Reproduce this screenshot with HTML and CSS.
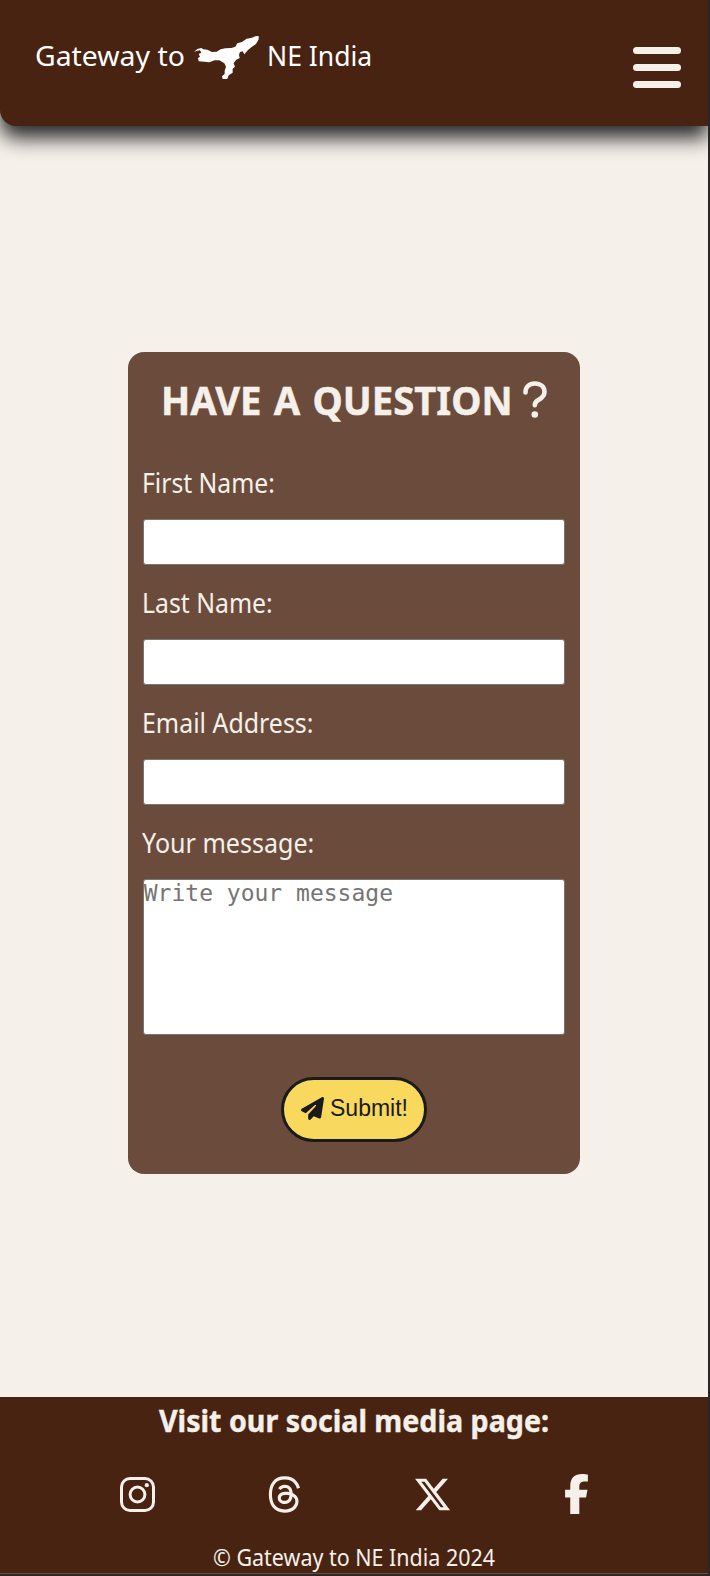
FILE: index.html
```html
<!DOCTYPE html>
<html lang="en">
<head>
<meta charset="utf-8">
<title>Gateway to NE India</title>
<link rel="stylesheet" href="styles.css">
</head>
<body>
<div class="page">
  <header class="header">
    <a class="brand">
      <span class="brand-start"><span class="fit fit-gateway">Gateway to</span></span>
      <svg class="brand-map" viewBox="9 9 201 135"><path d="M12 60 22 51 34 48 40 52 52 53 66 60 80 59 92 52 106 49 124 48 136 44 142 34 156 30 170 20 186 17 196 13 206 12 206 22 198 36 186 44 174 54 163 67 158 58 150 60 147 68 149 78 138 84 131 94 135 104 128 110 128 122 116 130 112 141 98 141 96 133 104 126 104 116 108 104 103 94 88 85 74 85 58 91 44 89 26 88 24 78 30 74 26 66 34 62 30 55 22 56Z"/></svg>
      <span class="brand-end"><span class="fit fit-india">NE India</span></span>
    </a>
    <button class="menu" aria-label="Menu"><span></span><span></span><span></span></button>
  </header>
  <main class="main">
    <form class="card">
      <h1 class="card-title">
        <span class="title-text"><span class="fit fit-title">HAVE A QUESTION</span></span>
        <svg class="question" viewBox="0 0 24 37"><path d="M2.500 11.500C2.500 6 6.200 2.500 11.800 2.500C17.600 2.500 21.500 6 21.500 10.800C21.500 14.800 19.500 16.800 15.500 18.900C12.800 20.300 11.800 21.800 11.800 24.300"/><circle cx="11.800" cy="33.500" r="3.300"/></svg>
      </h1>
      <label class="field"><span class="label fit fit-first">First Name:</span><input type="text"></label>
      <label class="field"><span class="label fit fit-last">Last Name:</span><input type="text"></label>
      <label class="field"><span class="label fit fit-email">Email Address:</span><input type="email"></label>
      <label class="field"><span class="label fit fit-message">Your message:</span><textarea placeholder="Write your message"></textarea></label>
      <button class="submit" type="button">
        <svg class="plane" viewBox="0 0 512 512"><path d="M498.100 5.600c10.100 7 15.400 19.100 13.500 31.200l-64 416c-1.500 9.700-7.400 18.200-16 23s-18.900 5.400-28 1.600L284 427.700l-68.500 74.100c-8.900 9.700-22.900 12.900-35.200 8.100S160 493.200 160 480V396.400c0-4 1.500-7.800 4.200-10.700L331.800 202.800c5.800-6.300 5.600-16-.4-22s-15.700-6.400-22-.7L106 360.800 17.700 316.600C7.100 311.300 .3 300.700 0 288.900s5.900-22.800 16.100-28.700l448-256c10.700-6.100 23.900-5.500 34 1.400z"/></svg>
        <span>Submit!</span>
      </button>
    </form>
  </main>
  <footer class="footer">
    <h2 class="social-title"><span class="fit fit-social">Visit our social media page:</span></h2>
    <nav class="socials">
      <a><svg class="instagram" viewBox="0 0 35 35"><rect x="1.500" y="1.500" width="32" height="32" rx="8.500"/><circle cx="17.500" cy="17.500" r="7.400"/><circle class="dot" cx="26.800" cy="8.200" r="2.100"/></svg></a>
      <a><svg class="threads" viewBox="32 0 384 512"><path d="M331.500 235.700c2.200 .9 4.200 1.900 6.300 2.800c29.200 14.100 50.600 35.200 61.800 61.400c15.700 36.500 17.200 95.800-30.300 143.200c-36.200 36.200-80.300 52.500-142.600 53h-.3c-70.200-.5-124.100-24.100-160.400-70.200c-32.300-41-48.900-98.100-49.500-169.600V256v-.2C17 184.300 33.600 127.200 65.900 86.200C102.200 40.100 156.200 16.500 226.400 16h.3c70.300 .5 124.900 24 162.300 69.900c18.400 22.700 32 50 40.600 81.700l-40.400 10.800c-7.100-25.800-17.800-47.800-32.200-65.400c-29.200-35.800-73-54.200-130.500-54.600c-57 .5-100.100 18.800-128.200 54.400C72.100 146.100 58.500 194.300 58 256c.5 61.700 14.100 109.900 40.300 143.300c28 35.600 71.200 53.900 128.200 54.400c51.400-.4 85.400-12.600 113.700-40.900c32.300-32.200 31.700-71.800 21.400-95.900c-6.100-14.200-17.100-26-31.900-34.900c-3.700 26.900-11.800 48.300-24.700 64.800c-17.100 21.800-41.400 33.600-72.700 35.300c-23.600 1.300-46.300-4.400-63.900-16c-20.800-13.800-33-34.800-34.300-59.300c-2.500-48.300 35.700-83 95.200-86.400c21.100-1.200 40.900-.3 59.200 2.800c-2.400-14.800-7.300-26.600-14.600-35.200c-10-11.700-25.600-17.700-46.200-17.800H227c-16.600 0-39 4.600-53.300 26.300l-34.400-23.600c19.200-29.100 50.300-45.100 87.800-45.100h.8c62.600 .4 99.900 39.500 103.700 107.700l-.2 .2zm-156 68.800c1.300 25.100 28.400 36.800 54.600 35.300c25.600-1.400 54.600-11.400 59.500-73.200c-13.200-2.900-27.800-4.400-43.400-4.400c-4.800 0-9.600 .1-14.400 .4c-42.900 2.400-57.200 23.200-56.200 41.800z"/></svg></a>
      <a><svg class="x-logo" viewBox="0 0 512 512"><path d="M389.200 48h70.600L305.600 224.200 487 464H345L233.700 318.600 106.500 464H35.800L200.700 275.500 26.800 48H172.400L272.900 180.900 389.200 48zM364.400 421.800h39.100L151.100 88h-42L364.400 421.800z"/></svg></a>
      <a><svg class="facebook" viewBox="0 0 320 512"><path d="M80 299.300V512H196V299.300h86.500l18-97.800H196V166.900c0-51.700 20.300-71.500 72.700-71.500c16.300 0 29.400 .4 37 1.200V7.900C291.400 4 256.400 0 236.200 0C129.300 0 80 50.500 80 159.400v42.100H14v97.800H80z"/></svg></a>
    </nav>
    <p class="copyright"><span class="fit fit-copy">© Gateway to NE India 2024</span></p>
  </footer>
</div>
</body>
</html>
```

FILE: styles.css
```css
* { box-sizing: border-box; }

body {
  margin: 0;
  width: 710px;
  height: 1576px;
  overflow: hidden;
  background: #28282b;
  color: #f5f0e9;
  font-family: "Noto Sans", "Open Sans", sans-serif;
}

.page {
  width: 708px;
  height: 1574px;
  display: flex;
  flex-direction: column;
  overflow: hidden;
  background: #f5f0e9;
}

.fit {
  display: inline-block;
  white-space: nowrap;
  transform-origin: left center;
}

.header {
  height: 125.500px;
  flex: none;
  display: flex;
  justify-content: space-between;
  align-items: flex-start;
  padding: 35px 27px 0 35px;
  border-radius: 0 0 0 16px;
  background: #482312;
  box-shadow: 0 12px 20px #28282b;
}

.brand {
  display: flex;
  align-items: flex-start;
  color: #fff;
  font-size: 28px;
  line-height: 40px;
}

.brand-start { width: 158px; }
.brand-map { width: 67px; height: 45px; fill: #fff; }
.brand-end { padding-left: 7px; }
.fit-gateway { transform: scaleX(1.014); }
.fit-india { transform: scaleX(0.947); }

.menu {
  display: flex;
  flex-direction: column;
  gap: 9.700px;
  margin-top: 11.500px;
  padding: 0;
  border: 0;
  background: none;
}

.menu span {
  width: 48px;
  height: 7.500px;
  border-radius: 4px;
  background: #f5f0e9;
}

.main {
  flex: 1;
  display: flex;
  justify-content: center;
  align-items: flex-start;
  padding-top: 226px;
}

.card {
  width: 452.500px;
  height: 822.500px;
  display: flex;
  flex-direction: column;
  align-items: center;
  padding: 24px 15px;
  border-radius: 16px;
  background: #6b4c3c;
}

.card-title {
  display: flex;
  width: 386px;
  height: 83px;
  margin: 0;
  font-size: 40px;
  line-height: 48px;
}

.title-text { width: 362px; }
.fit-title { transform: scaleX(0.956); word-spacing: 2.500px; -webkit-text-stroke: 0.500px #f5f0e9; }

.question {
  width: 24px;
  height: 37px;
  margin-top: 5px;
  fill: none;
  stroke: #f5f0e9;
  stroke-width: 4.600;
  stroke-linecap: round;
}

.question circle { fill: #f5f0e9; stroke: none; }

.field {
  display: flex;
  flex-direction: column;
  align-items: flex-start;
  width: 100%;
  height: 120px;
}

.label {
  flex: none;
  height: 60px;
  margin-left: -0.500px;
  font-size: 27px;
  line-height: 47px;
}

.fit-first { transform: scaleX(0.915); }
.fit-last { transform: scaleX(0.918); }
.fit-email { transform: scaleX(0.923); }
.fit-message { transform: scaleX(0.928); }

input, textarea {
  width: 422.500px;
  border: 1px solid #767676;
  border-radius: 3px;
  background: #fff;
  padding: 0;
}

input { height: 46px; }

textarea {
  height: 156px;
  flex: none;
  resize: none;
  font-family: "DejaVu Sans Mono", monospace;
  font-size: 23px;
  line-height: 27px;
}

textarea::placeholder { color: #757575; }

.submit {
  display: flex;
  flex: none;
  align-items: center;
  gap: 6px;
  width: 146px;
  height: 65px;
  margin-top: 138px;
  padding: 0 0 1px 17px;
  border: 3.500px solid #1a1a1a;
  border-radius: 33px;
  background: #f9d85e;
  color: #1a1a1a;
  font-family: "Liberation Sans", sans-serif;
  font-size: 23px;
}

.plane { width: 23px; height: 23px; flex: none; fill: #1a1a1a; }

.footer {
  height: 177.500px;
  flex: none;
  background: #482312;
  border-bottom: 1px solid #6b4c3c;
}

.social-title {
  height: 76px;
  margin: 0;
  padding-left: 159px;
  font-size: 30px;
  line-height: 48px;
}

.fit-social { transform: scaleX(0.954); -webkit-text-stroke: 0.400px #f5f0e9; }

.socials {
  display: grid;
  grid-template-columns: repeat(4, 147px);
  justify-content: center;
  align-items: center;
  height: 43px;
  padding-left: 7px;
}

.socials a { display: flex; justify-content: center; align-items: center; }
.socials svg { fill: #f5f0e9; }
.socials .instagram { width: 35px; height: 35px; fill: none; stroke: #f5f0e9; stroke-width: 3; }
.instagram .dot { fill: #f5f0e9; stroke: none; }
.threads { width: 29px; height: 39px; overflow: visible; }
.x-logo { width: 39px; height: 39px; margin-left: 2px; }
.facebook { width: 25px; height: 40px; margin-right: 3px; }

.copyright {
  margin: 0;
  padding: 26px 0 0 213px;
  font-size: 23px;
  line-height: 30px;
}

.fit-copy { transform: scaleX(0.933); }
```
